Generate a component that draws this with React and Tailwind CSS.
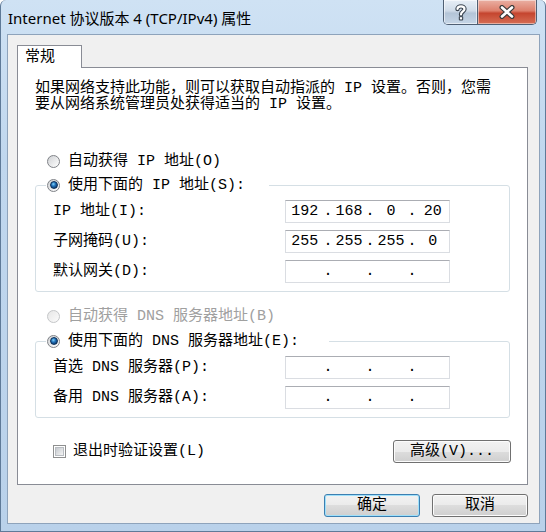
import React from "react";

const BODY = "font-['Liberation_Mono','Noto_Sans_CJK_SC',monospace] text-[15px] leading-[15px] text-black";

function Radio({ checked, disabled }) {
  return (
    <span
      className={
        disabled
          ? "flex h-[13px] w-[13px] shrink-0 items-center justify-center rounded-full border border-[#c4c6c8] bg-[linear-gradient(135deg,#e6e6e6,#fbfbfb)]"
          : "flex h-[13px] w-[13px] shrink-0 items-center justify-center rounded-full border border-[#7f8287] bg-[linear-gradient(135deg,#cfd1d4,#ffffff)]"
      }
    >
      {checked && (
        <span className="h-[8px] w-[8px] rounded-full border border-[#0b2f57] bg-[radial-gradient(circle_at_40%_35%,#7fd2fb_0%,#1f6fb7_40%,#0a305f_90%)]" />
      )}
    </span>
  );
}

function Checkbox() {
  return (
    <span className="flex h-[13px] w-[13px] shrink-0 border border-[#8e8f8f] bg-white p-px">
      <span className="h-full w-full border border-[#b9bdc2] bg-[linear-gradient(135deg,#c6cacf,#f4f4f4)]" />
    </span>
  );
}

function IpBox({ v = ["", "", "", ""] }) {
  return (
    <div className="flex h-[23px] w-[165px] items-center border border-[#dadde2] border-t-[#abadb3] bg-white">
      <span className="w-[37.5px] text-center">{v[0]}</span>
      <span className="w-[9px] text-center">.</span>
      <span className="w-[33px] text-center">{v[1]}</span>
      <span className="w-[9px] text-center">.</span>
      <span className="w-[33px] text-center">{v[2]}</span>
      <span className="w-[9px] text-center">.</span>
      <span className="flex-1 text-center">{v[3]}</span>
    </div>
  );
}

function Row({ label, v }) {
  return (
    <div className="mt-[7px] flex h-[23px] items-center pl-[17px]">
      <span className="w-[232px] whitespace-nowrap">{label}</span>
      <IpBox v={v} />
    </div>
  );
}

function WinButton({ children, def, className = "" }) {
  return (
    <button
      className={
        (def
          ? "flex h-[23px] items-center justify-center rounded-[3px] border border-[#3c7fb1] bg-[linear-gradient(to_bottom,#f2f2f2_0%,#ebebeb_50%,#dddddd_50%,#cfcfcf_100%)] shadow-[inset_0_0_0_1px_#9fe0fa] "
          : "flex h-[23px] items-center justify-center rounded-[3px] border border-[#707070] bg-[linear-gradient(to_bottom,#f2f2f2_0%,#ebebeb_50%,#dddddd_50%,#cfcfcf_100%)] shadow-[inset_0_0_0_1px_#fcfcfc] ") +
        className
      }
    >
      {children}
    </button>
  );
}

export default function App() {
  return (
    <div className={"flex h-[532px] w-[546px] flex-col overflow-hidden rounded-t-[6px] border-x border-b border-[#5f7a98] bg-[linear-gradient(to_bottom,#cfe2f4_0%,#c0d7ee_30%,#b9d1ea_100%)] " + BODY}>
      {/* title bar */}
      <div className="flex h-[34px] shrink-0">
        <div className="whitespace-nowrap pl-[7px] pt-[8px] font-['Noto_Sans','Noto_Sans_CJK_SC',sans-serif] text-[15px] leading-[20px] text-black">
          Internet 协议版本 4 (TCP/IPv4) 属性
        </div>
        <div className="ml-auto mr-[8px] flex h-[25px] overflow-hidden rounded-b-[5px] border-x border-b border-[#4f5f73]">
          <div className="flex w-[34px] items-center justify-center border-r border-[#4f5f73] bg-[linear-gradient(to_bottom,#e7eef6_0%,#cfdbe8_45%,#b3c4d7_55%,#c6d6e7_100%)] shadow-[inset_0_0_0_1px_rgba(255,255,255,0.55)]">
            <svg width="12" height="17" viewBox="0 0 12 17">
              <path d="M2.5 5 C2.5 1.5 9.5 1.5 9.5 5 C9.5 7.5 6 7.5 6 10.5" fill="none" stroke="#3a4450" strokeWidth="4.4" strokeLinecap="round" />
              <rect x="3.8" y="12.2" width="4.4" height="4.2" rx="0.8" fill="#3a4450" />
              <path d="M2.5 5 C2.5 1.5 9.5 1.5 9.5 5 C9.5 7.5 6 7.5 6 10.5" fill="none" stroke="#ffffff" strokeWidth="2.2" strokeLinecap="round" />
              <rect x="4.9" y="13.2" width="2.2" height="2.2" fill="#ffffff" />
            </svg>
          </div>
          <div className="flex w-[58px] items-center justify-center bg-[linear-gradient(to_bottom,#eab0a3_0%,#dd7f6c_45%,#c5452f_55%,#d66e55_100%)] shadow-[inset_0_0_0_1px_rgba(255,255,255,0.45)]">
            <svg width="18" height="14" viewBox="0 0 18 14">
              <path d="M4 2.5 L14 11.5 M14 2.5 L4 11.5" fill="none" stroke="#3b3b3b" strokeWidth="5" strokeLinecap="round" />
              <path d="M4 2.5 L14 11.5 M14 2.5 L4 11.5" fill="none" stroke="#ffffff" strokeWidth="2.6" strokeLinecap="round" />
            </svg>
          </div>
        </div>
      </div>

      {/* client area */}
      <div className="ml-[6px] flex h-[490px] w-[533px] flex-col border border-[#8ea3bb] bg-[#f0f0f0] pl-[9px] pt-[10px]">
        {/* tab */}
        <div className="relative z-10 flex h-[23px] w-[65px] items-center border-x border-t border-[#898c95] bg-white pl-[7px]">
          常规
        </div>
        {/* tab panel */}
        <div className="relative -mt-px flex h-[418px] w-[511px] flex-col border border-[#898c95] bg-white">
          <p className="ml-[17px] mt-[13px] whitespace-nowrap leading-[16px]">
            如果网络支持此功能，则可以获取自动指派的 IP 设置。否则，您需
            <br />
            要从网络系统管理员处获得适当的 IP 设置。
          </p>

          <div className="ml-[29px] mt-[40px] flex h-[16px] items-center">
            <Radio />
            <span className="ml-[8px] whitespace-nowrap">自动获得 IP 地址(O)</span>
          </div>

          <fieldset className="ml-[17px] mt-[8px] w-[475px] rounded-[3px] border border-[#d5dfe5] pb-[8px]">
            <legend className="ml-[10px] w-[223px]">
              <div className="flex h-[16px] items-center pl-px">
                <Radio checked />
                <span className="ml-[8px] whitespace-nowrap">使用下面的 IP 地址(S):</span>
              </div>
            </legend>
            <Row label="IP 地址(I):" v={["192", "168", "0", "20"]} />
            <Row label="子网掩码(U):" v={["255", "255", "255", "0"]} />
            <Row label="默认网关(D):" />
          </fieldset>

          <div className="ml-[29px] mt-[16px] flex h-[16px] items-center text-[#a0a0a0]">
            <Radio disabled />
            <span className="ml-[8px] whitespace-nowrap">自动获得 DNS 服务器地址(B)</span>
          </div>

          <fieldset className="ml-[17px] mt-[9px] w-[475px] rounded-[3px] border border-[#d5dfe5] pb-[8px]">
            <legend className="ml-[10px] w-[283px]">
              <div className="flex h-[16px] items-center pl-px">
                <Radio checked />
                <span className="ml-[8px] whitespace-nowrap">使用下面的 DNS 服务器地址(E):</span>
              </div>
            </legend>
            <Row label="首选 DNS 服务器(P):" />
            <Row label="备用 DNS 服务器(A):" />
          </fieldset>

          <div className="mt-[22px] flex h-[23px] items-center pl-[35px] pr-[16px]">
            <Checkbox />
            <span className="ml-[7px] whitespace-nowrap">退出时验证设置(L)</span>
            <WinButton className="ml-auto w-[118px]">高级(V)...</WinButton>
          </div>
        </div>

        {/* dialog buttons */}
        <div className="mt-[9px] flex justify-end gap-[12px] pr-[11px]">
          <WinButton def className="w-[96px]">确定</WinButton>
          <WinButton className="w-[96px]">取消</WinButton>
        </div>
      </div>
    </div>
  );
}
